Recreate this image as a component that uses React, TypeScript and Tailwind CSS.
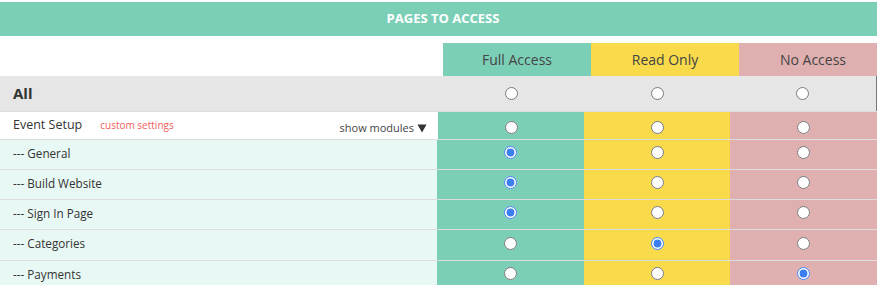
import React from "react";

type Level = "full" | "read" | "none";

const modules: { name: string; level: Level }[] = [
  { name: "--- General", level: "full" },
  { name: "--- Build Website", level: "full" },
  { name: "--- Sign In Page", level: "full" },
  { name: "--- Categories", level: "read" },
  { name: "--- Payments", level: "none" },
];

function Radio({ name, checked }: { name: string; checked?: boolean }) {
  return (
    <input
      type="radio"
      name={name}
      defaultChecked={checked}
      className="w-[13px] h-[13px] m-0 accent-[#3b7ef2]"
    />
  );
}

export default function App() {
  return (
    <div className="w-[877px] h-[285px] overflow-hidden bg-white font-['Open_Sans',sans-serif] text-[#333]">
      {/* title bar */}
      <div className="pt-[2px]">
        <div className="w-[886px] h-[34px] bg-[#7ccfb7] flex items-center justify-center text-white font-bold text-[13px]">
          PAGES TO ACCESS
        </div>
      </div>

      {/* access level headings */}
      <div className="mt-[7px] flex h-[33px] w-[887px] text-[14px] text-[#444]">
        <div className="w-[443px]" />
        <div className="w-[148px] bg-[#7ccfb7] flex items-center justify-center">Full Access</div>
        <div className="w-[148px] bg-[#f8da4b] flex items-center justify-center">Read Only</div>
        <div className="w-[148px] bg-[#e0b0b0] flex items-center justify-center">No Access</div>
      </div>

      {/* all pages */}
      <div className="grid grid-cols-[438px_146px_146px_1fr] h-[35px] bg-[#e6e6e6]">
        <div className="flex items-center pl-[13px] font-bold text-[15px]">All</div>
        <div className="flex items-center justify-center">
          <Radio name="all" />
        </div>
        <div className="flex items-center justify-center">
          <Radio name="all" />
        </div>
        <div className="flex items-center justify-center pr-[1px] border-r border-[#777]">
          <Radio name="all" />
        </div>
      </div>

      {/* event setup group */}
      <div className="grid grid-cols-[438px_146px_146px_1fr] h-[28px] border-t border-[#dddddd]">
        <div className="flex items-center pl-[13px] pr-[11px] bg-white">
          <span className="text-[12.5px] text-[#333]">Event Setup</span>
          <span className="ml-[18px] text-[10px] text-[#f25c5c]">custom settings</span>
          <span className="ml-auto pt-[5px] flex items-center gap-[3px] text-[11px] text-[#444]">
            show modules
            <svg width="10" height="9" viewBox="0 0 10 9" className="mt-[1px]">
              <path d="M0.5 0.5 H9.5 L5 8.5 Z" fill="#333" />
            </svg>
          </span>
        </div>
        <div className="bg-[#7ccfb7] flex items-center justify-center pt-[3px]">
          <Radio name="event" />
        </div>
        <div className="bg-[#f8da4b] flex items-center justify-center pt-[3px]">
          <Radio name="event" />
        </div>
        <div className="bg-[#e0b0b0] flex items-center justify-center pt-[3px] pr-[1px]">
          <Radio name="event" />
        </div>
      </div>

      {modules.map((m, i) => (
        <div
          key={m.name}
          className={`grid grid-cols-[438px_146px_146px_1fr] border-t border-[#dddddd] ${
            i === 3 ? "h-[31px]" : "h-[30px]"
          }`}
        >
          <div className="flex items-center pl-[13px] pb-[2px] bg-[#e8f8f4] border-r border-[#7ccfb7] text-[11.7px] text-[#333]">
            {m.name}
          </div>
          <div className="bg-[#7ccfb7] flex items-center justify-center pb-[4px] -ml-[1px]">
            <Radio name={`m${i}`} checked={m.level === "full"} />
          </div>
          <div className="bg-[#f8da4b] flex items-center justify-center pb-[4px]">
            <Radio name={`m${i}`} checked={m.level === "read"} />
          </div>
          <div className="bg-[#e0b0b0] flex items-center justify-center pb-[4px] pr-[1px]">
            <Radio name={`m${i}`} checked={m.level === "none"} />
          </div>
        </div>
      ))}
    </div>
  );
}
